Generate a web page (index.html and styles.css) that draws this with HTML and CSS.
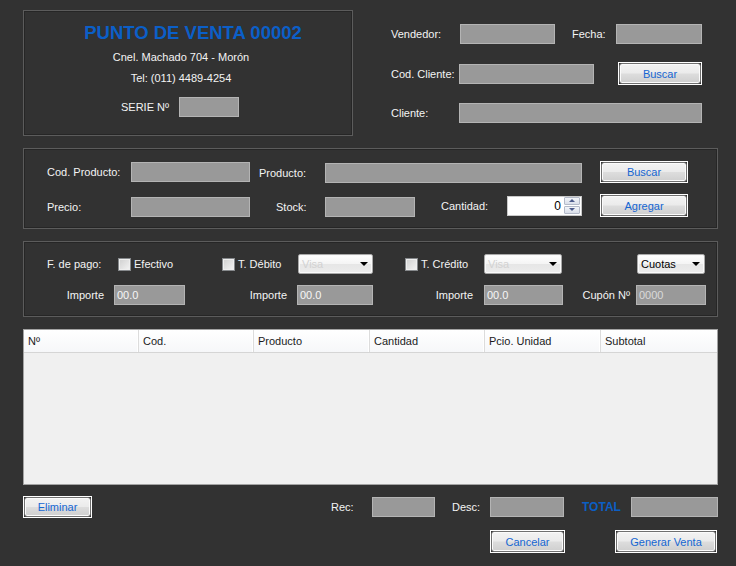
FILE: index.html
```html
<!DOCTYPE html>
<html lang="es">
<head>
<meta charset="utf-8">
<title>Punto de Venta</title>
<link rel="stylesheet" href="styles.css">
</head>
<body>
<div class="app">
  <div class="top">
    <div class="panel brand">
      <div class="title">PUNTO DE VENTA 00002</div>
      <div class="line">Cnel. Machado 704 - Morón</div>
      <div class="line">Tel: (011) 4489-4254</div>
      <div class="serie"><span>SERIE Nº</span><div class="field f-serie"></div></div>
    </div>
    <div class="client">
      <div class="crow">
        <span class="l-vend">Vendedor:</span><div class="field f-vend"></div>
        <span class="l-fecha">Fecha:</span><div class="field f-fecha"></div>
      </div>
      <div class="crow">
        <span class="l-cc">Cod. Cliente:</span><div class="field f-cc"></div>
        <button class="btn b-cc"><span>Buscar</span></button>
      </div>
      <div class="crow">
        <span class="l-cc">Cliente:</span><div class="field f-cli"></div>
      </div>
    </div>
  </div>

  <div class="panel product">
    <div class="prow">
      <span class="l-codp">Cod. Producto:</span><div class="field f-codp"></div>
      <span class="l-prod low">Producto:</span><div class="field f-prod low"></div>
      <button class="btn b-side h22"><span>Buscar</span></button>
    </div>
    <div class="prow">
      <span class="l-codp low">Precio:</span><div class="field f-codp low"></div>
      <span class="l-stock low">Stock:</span><div class="field f-stock low"></div>
      <span class="l-cant">Cantidad:</span>
      <div class="spin">
        <span class="spin-val">0</span>
        <div class="spin-btns"><span class="sb up"></span><span class="sb dn"></span></div>
      </div>
      <button class="btn b-side"><span>Agregar</span></button>
    </div>
  </div>

  <div class="panel pay">
    <div class="yrow">
      <span class="l-fpago">F. de pago:</span>
      <span class="chk g-efec"><i class="ck"></i>Efectivo</span>
      <span class="chk g-deb"><i class="ck"></i>T. Débito</span>
      <div class="sel s-deb"><span class="dim">Visa</span><i class="caret"></i></div>
      <span class="chk g-cred"><i class="ck"></i>T. Crédito</span>
      <div class="sel s-cred"><span class="dim">Visa</span><i class="caret"></i></div>
      <div class="sel s-cuotas"><span>Cuotas</span><i class="caret"></i></div>
    </div>
    <div class="yrow">
      <span class="rl l-imp1">Importe</span><div class="field f-imp1">00.0</div>
      <span class="rl l-imp2">Importe</span><div class="field f-imp2">00.0</div>
      <span class="rl l-imp3">Importe</span><div class="field f-imp3">00.0</div>
      <span class="rl l-cupon">Cupón Nº</span><div class="field f-cupon">0000</div>
    </div>
  </div>

  <div class="grid">
    <div class="ghead">
      <div class="gh">Nº</div>
      <div class="gh">Cod.</div>
      <div class="gh">Producto</div>
      <div class="gh">Cantidad</div>
      <div class="gh">Pcio. Unidad</div>
      <div class="gh last">Subtotal</div>
    </div>
    <div class="gbody"></div>
  </div>

  <div class="actions">
    <button class="btn b-elim h22"><span>Eliminar</span></button>
    <div class="totals">
      <span class="l-rec">Rec:</span><div class="field f-rec"></div>
      <span class="l-desc">Desc:</span><div class="field f-desc"></div>
      <span class="l-total">TOTAL</span><div class="field f-total"></div>
    </div>
  </div>

  <div class="final">
    <button class="btn b-cancel"><span>Cancelar</span></button>
    <button class="btn b-gen"><span>Generar Venta</span></button>
  </div>
</div>
</body>
</html>
```

FILE: styles.css
```css
* { box-sizing: border-box; }

body {
  margin: 0;
  width: 736px;
  height: 566px;
  overflow: hidden;
  background: #323232;
  font-family: "Liberation Sans", Arial, sans-serif;
  font-size: 11px;
  color: #f4f4f4;
}

.app {
  padding: 10px 0 0 23px;
  width: 736px;
}

/* ---------- generic controls ---------- */
.panel {
  border: 1px solid #5c5c5c;
  box-shadow: inset 0 0 0 1px #262626;
}

.field {
  height: 20px;
  background: #999999;
  border: 1px solid #b4b4b4;
  color: #f6f6f6;
  padding-left: 2px;
  line-height: 18px;
  font-size: 11px;
}

.btn {
  display: block;
  padding: 0;
  margin: 0;
  height: 23px;
  border: 1px solid #ffffff;
  background: transparent;
  font: inherit;
  font-size: 11px;
  cursor: default;
}
.btn.h22 { height: 22px; }
.btn span {
  display: flex;
  align-items: center;
  justify-content: center;
  width: 100%;
  height: 100%;
  border: 1px solid #707070;
  border-radius: 3px;
  background: linear-gradient(#f3f3f3 0%, #ebebeb 48%, #dddddd 52%, #cfcfcf 100%);
  color: #1566d2;
  box-shadow: inset 0 0 0 1px #fbfbfb;
}

/* ---------- top area ---------- */
.top {
  display: flex;
  align-items: flex-start;
}

.brand {
  width: 330px;
  height: 126px;
  padding-top: 11px;
  display: flex;
  flex-direction: column;
  align-items: center;
}
.title {
  font-size: 18.5px;
  font-weight: bold;
  color: #0b5fc8;
  line-height: 22px;
  padding-left: 10px;
}
.line {
  line-height: 16px;
  margin-top: 5px;
  padding-right: 14px;
}
.serie {
  display: flex;
  align-items: center;
  gap: 10px;
  height: 20px;
  margin-top: 11px;
  padding-right: 16px;
}
.f-serie { width: 60px; }

.client {
  margin-left: 38px;
  padding-top: 14px;
  width: 311px;
}
.crow {
  display: flex;
  align-items: center;
}
.crow + .crow { margin-top: 18px; }
.l-vend { width: 69px; }
.f-vend { width: 95px; }
.l-fecha { width: 44px; margin-left: 17px; }
.f-fecha { width: 86px; }
.l-cc { width: 68px; }
.f-cc { width: 135px; }
.b-cc { width: 84px; margin-left: 24px; }
.f-cli { width: 243px; }

/* ---------- product panel ---------- */
.product {
  margin-top: 12px;
  width: 695px;
  height: 81px;
  padding: 11px 0 0 23px;
}
.prow {
  display: flex;
  align-items: center;
  height: 23px;
}
.prow + .prow { margin-top: 11px; }
.low { margin-top: 3px; }
.l-codp { width: 84px; }
.f-codp { width: 119px; }
.l-prod { width: 66px; margin-left: 9px; }
.f-prod { width: 257px; }
.b-side { width: 88px; margin-left: 18px; }
.l-stock { width: 49px; margin-left: 26px; }
.f-stock { width: 90px; }
.l-cant { width: 66px; margin-left: 26px; }

.spin {
  display: flex;
  width: 75px;
  height: 20px;
  background: #ffffff;
  border: 1px solid #c9c9c9;
}
.spin-val {
  flex: 1;
  text-align: right;
  color: #000;
  font-size: 12px;
  line-height: 18px;
  padding-right: 3px;
}
.spin-btns {
  width: 17px;
  display: flex;
  flex-direction: column;
  gap: 1px;
  padding: 0 1px 1px 0;
}
.sb {
  flex: 1;
  display: flex;
  align-items: center;
  justify-content: center;
  border: 1px solid #b3b9c8;
  border-radius: 1px;
  background: linear-gradient(#f3f5f9, #d9dee9);
}
.sb::after {
  content: "";
  width: 0;
  height: 0;
  border-left: 3px solid transparent;
  border-right: 3px solid transparent;
}
.up::after { border-bottom: 3px solid #4d5c8c; }
.dn::after { border-top: 3px solid #4d5c8c; }

/* ---------- payment panel ---------- */
.pay {
  margin-top: 12px;
  width: 695px;
  height: 76px;
  padding: 12px 0 0 23px;
}
.yrow {
  display: flex;
  align-items: center;
  height: 20px;
}
.yrow + .yrow { margin-top: 11px; }
.l-fpago { width: 71px; }
.chk {
  display: flex;
  align-items: center;
}
.ck {
  display: block;
  width: 13px;
  height: 13px;
  margin-right: 3px;
  border: 1px solid #86898c;
  background: linear-gradient(135deg, #cfcfcf, #f4f4f4);
  box-shadow: inset 0 0 0 1px #eeeeee;
}
.g-efec { width: 104px; }
.g-deb { width: 76px; }
.g-cred { width: 79px; margin-left: 32px; }

.sel {
  display: flex;
  align-items: center;
  justify-content: space-between;
  height: 20px;
  padding: 0 4px 0 3px;
  border: 1px solid #a9a9a9;
  border-radius: 2px;
  background: linear-gradient(#ffffff 0%, #f4f4f4 50%, #e6e6e6 52%, #ececec 100%);
  box-shadow: inset 0 0 0 1px #fafafa;
  color: #000;
}
.sel .dim { color: #d2d2d2; }
.caret {
  width: 0;
  height: 0;
  border-left: 4px solid transparent;
  border-right: 4px solid transparent;
  border-top: 4px solid #000;
}
.s-deb { width: 75px; }
.s-cred { width: 78px; }
.s-cuotas { width: 68px; margin-left: 75px; }

.rl { text-align: right; }
.l-imp1 { width: 67px; padding-right: 10px; }
.f-imp1 { width: 71px; }
.l-imp2 { width: 112px; padding-right: 10px; }
.f-imp2 { width: 76px; }
.l-imp3 { width: 111px; padding-right: 11px; }
.f-imp3 { width: 79px; }
.l-cupon { width: 73px; padding-right: 6px; }
.f-cupon { width: 70px; color: #dadada; }

/* ---------- grid ---------- */
.grid {
  margin-top: 12px;
  width: 695px;
  height: 156px;
  border: 1px solid #a3a3a3;
  background: #f0f0f0;
  display: flex;
  flex-direction: column;
}
.ghead {
  display: grid;
  grid-template-columns: 115px 115px 116px 115px 116px 1fr;
  height: 23px;
  background: linear-gradient(#ffffff, #f6f7f9);
  border-bottom: 1px solid #d5d5d5;
}
.gh {
  padding-left: 4px;
  line-height: 22px;
  color: #1b1b1b;
  border-right: 1px solid #dcdcdc;
  box-shadow: inset -1px 0 0 #ffffff;
}
.gh.last { border-right: none; box-shadow: none; }
.gbody { flex: 1; }

/* ---------- bottom ---------- */
.actions {
  margin-top: 11px;
  width: 695px;
  height: 22px;
  display: flex;
  align-items: center;
  justify-content: space-between;
}
.b-elim { width: 69px; }
.totals {
  display: flex;
  align-items: center;
}
.l-rec { width: 41px; }
.f-rec { width: 63px; }
.l-desc { width: 38px; margin-left: 17px; }
.f-desc { width: 74px; }
.l-total {
  width: 49px;
  margin-left: 18px;
  color: #0b5fc4;
  font-weight: bold;
  font-size: 12px;
}
.f-total { width: 87px; }

.final {
  margin-top: 12px;
  width: 695px;
  padding-right: 1px;
  display: flex;
  justify-content: flex-end;
  gap: 50px;
}
.b-cancel { width: 75px; }
.b-gen { width: 102px; }
```
